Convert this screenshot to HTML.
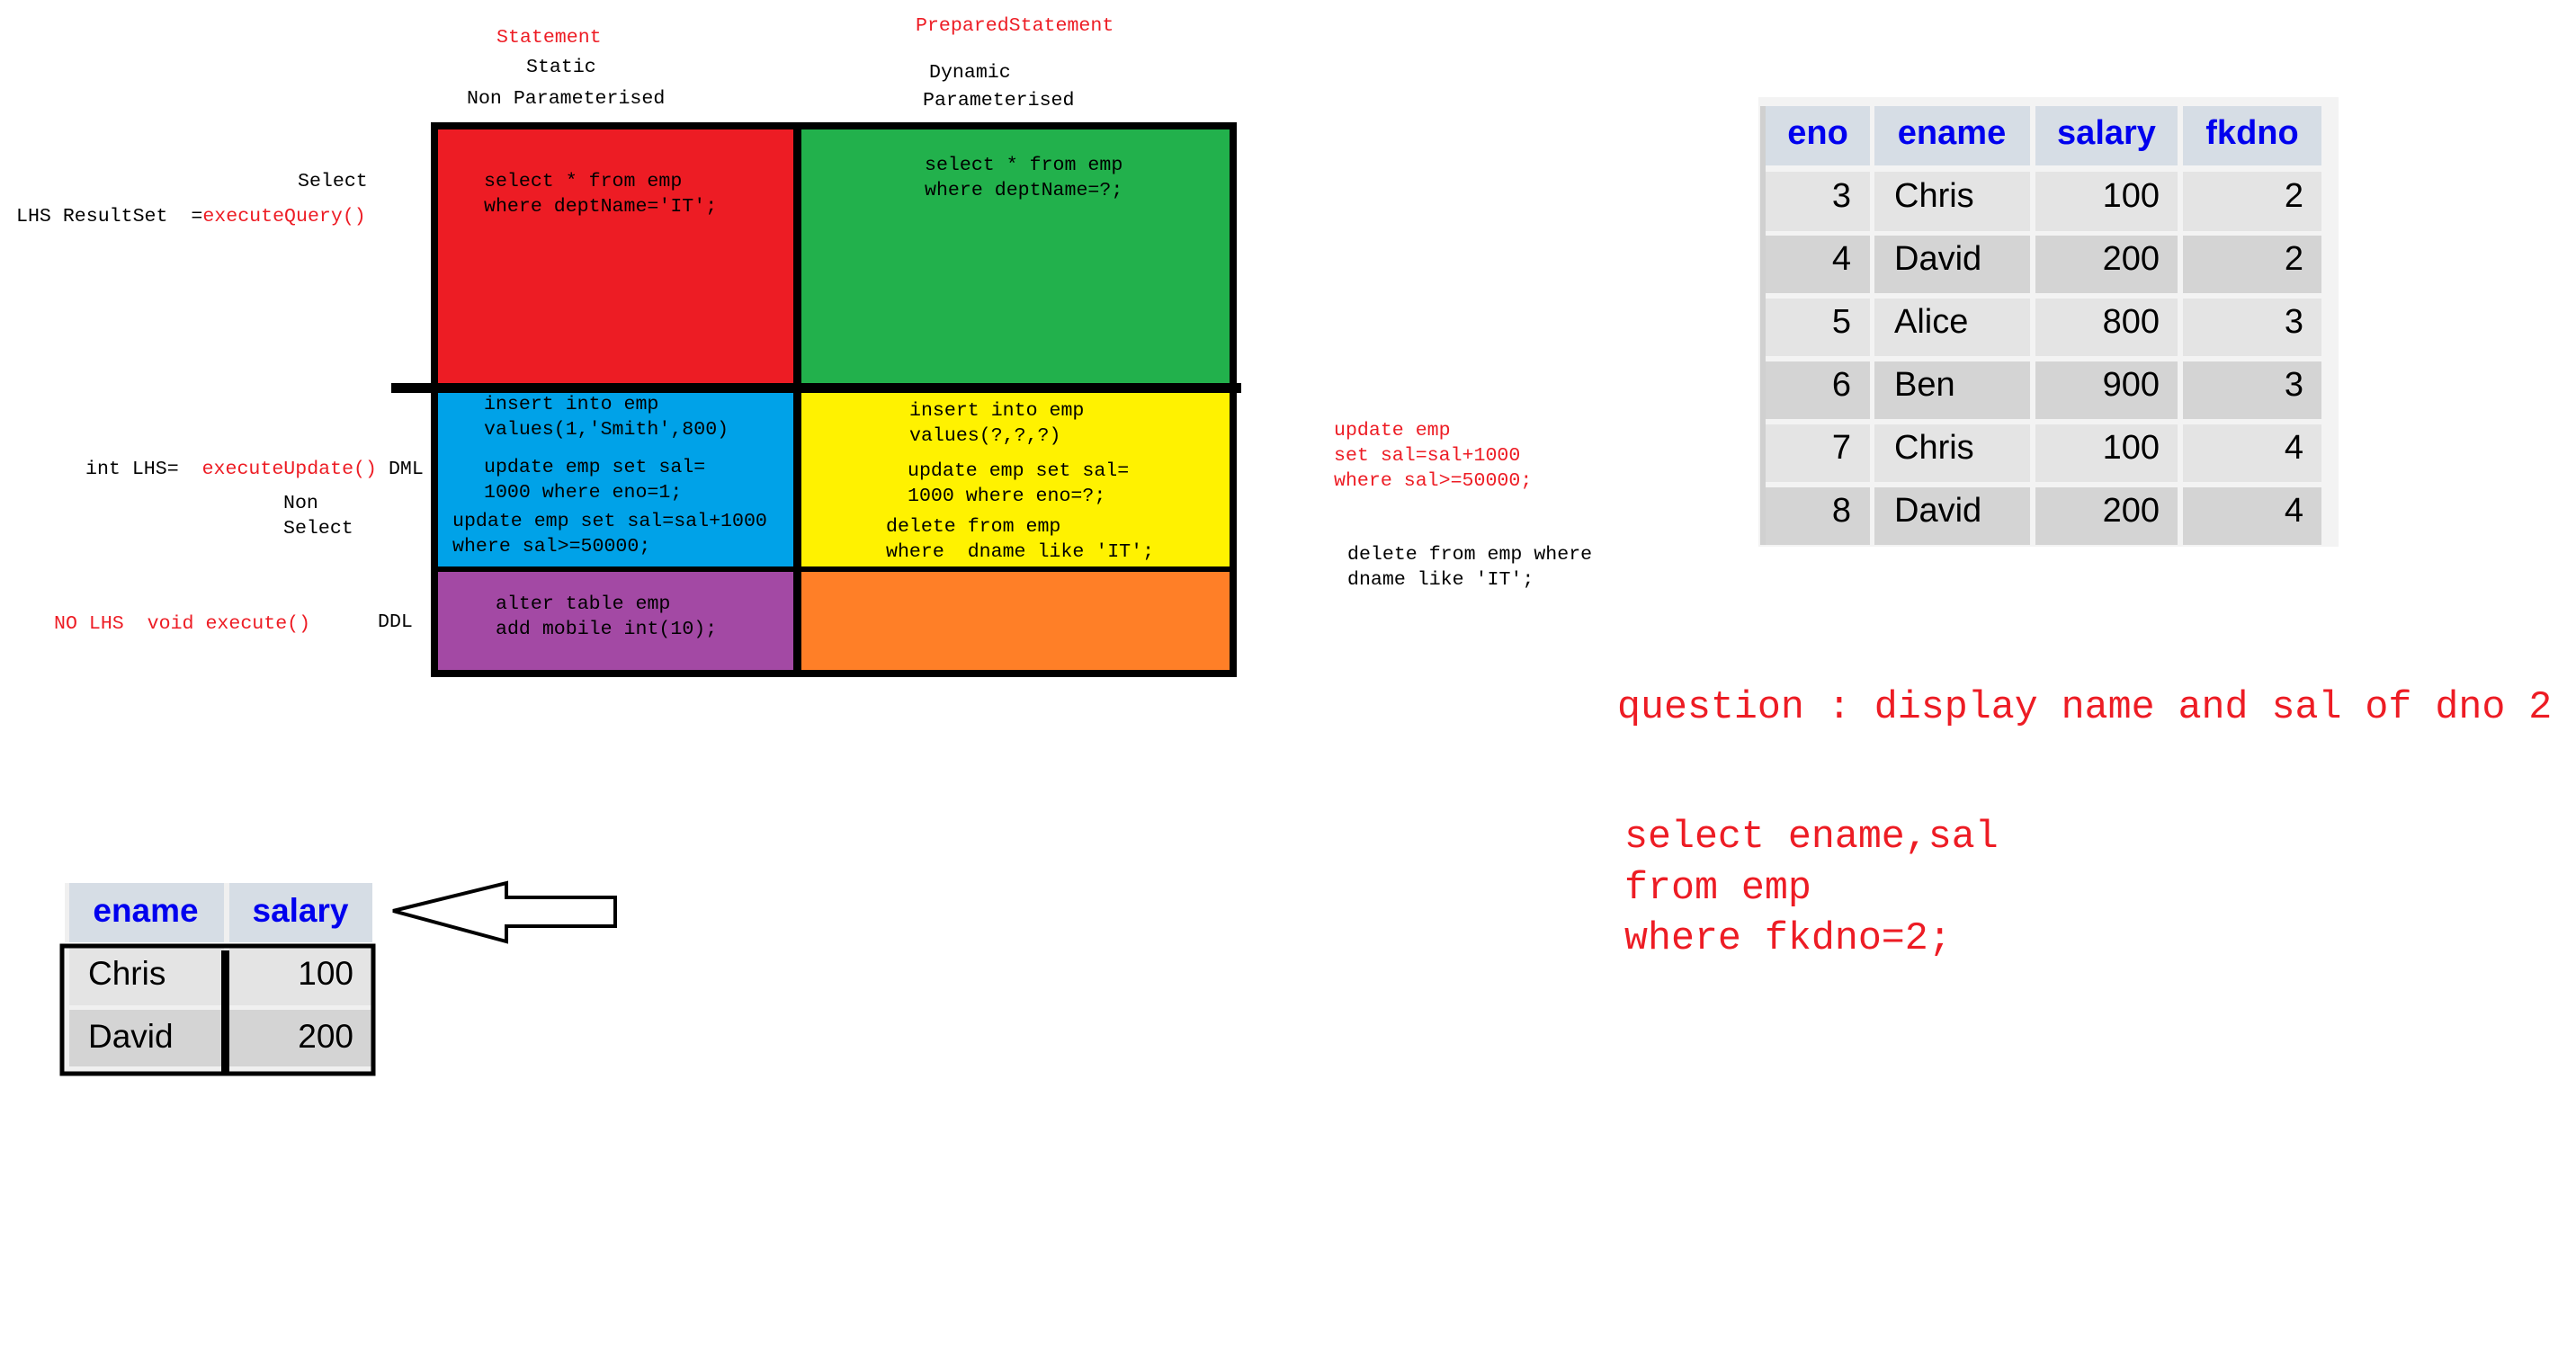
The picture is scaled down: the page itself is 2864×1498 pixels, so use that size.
<!DOCTYPE html>
<html><head><meta charset="utf-8"><style>
body{margin:0;width:2864px;height:1498px;background:#fff;position:relative;overflow:hidden;font-family:"Liberation Mono",monospace;}
#w{position:absolute;left:-4px;top:0;width:2864px;height:1498px;}
.t{position:absolute;white-space:pre;font-size:21.6px;line-height:28px;color:#000;}
.r{color:#ed1c24;}
.b{position:absolute;}
</style></head><body><div id="w">
<div class="t r" style="left:556px;top:28px">Statement</div>
<div class="t" style="left:589px;top:61px">Static</div>
<div class="t" style="left:523px;top:96px">Non Parameterised</div>
<div class="t r" style="left:1022px;top:15px">PreparedStatement</div>
<div class="t" style="left:1037px;top:67px">Dynamic</div>
<div class="t" style="left:1030px;top:98px">Parameterised</div>

<div class="b" style="left:483px;top:136px;width:896px;height:617px;background:#000"></div>
<div class="b" style="left:491px;top:144px;width:395px;height:282px;background:#ed1c24"></div>
<div class="b" style="left:895px;top:144px;width:476px;height:282px;background:#22b14c"></div>
<div class="b" style="left:491px;top:437px;width:395px;height:193px;background:#00a2e8"></div>
<div class="b" style="left:895px;top:437px;width:476px;height:193px;background:#fff200"></div>
<div class="b" style="left:491px;top:636px;width:395px;height:109px;background:#a349a4"></div>
<div class="b" style="left:895px;top:636px;width:476px;height:109px;background:#ff7f27"></div>
<div class="b" style="left:439px;top:426px;width:945px;height:11px;background:#000"></div>

<div class="t" style="left:542px;top:188px">select * from emp
where deptName='IT';</div>
<div class="t" style="left:1032px;top:170px">select * from emp
where deptName=?;</div>
<div class="t" style="left:542px;top:436px">insert into emp
values(1,'Smith',800)</div>
<div class="t" style="left:542px;top:506px">update emp set sal=
1000 where eno=1;</div>
<div class="t" style="left:507px;top:566px">update emp set sal=sal+1000
where sal&gt;=50000;</div>
<div class="t" style="left:1015px;top:443px">insert into emp
values(?,?,?)</div>
<div class="t" style="left:1013px;top:510px">update emp set sal=
1000 where eno=?;</div>
<div class="t" style="left:989px;top:572px">delete from emp
where  dname like 'IT';</div>
<div class="t" style="left:555px;top:658px">alter table emp
add mobile int(10);</div>

<div class="t" style="left:335px;top:188px">Select</div>
<div class="t" style="left:22px;top:227px">LHS ResultSet  =<span class="r">executeQuery()</span></div>
<div class="t" style="left:99px;top:508px">int LHS=  <span class="r">executeUpdate()</span> DML</div>
<div class="t" style="left:319px;top:546px">Non
Select</div>
<div class="t r" style="left:64px;top:680px">NO LHS  void execute()</div>
<div class="t" style="left:424px;top:678px">DDL</div>

<div class="t r" style="left:1487px;top:465px">update emp
set sal=sal+1000
where sal&gt;=50000;</div>
<div class="t" style="left:1502px;top:603px">delete from emp where
dname like 'IT';</div>

<div class="b" style="left:1959px;top:108px;width:645px;height:500px;background:#f3f3f3"></div>
<div class="b" style="left:1961px;top:118px;width:6px;height:488px;background:#d0d0d0"></div>
<svg class="b" style="left:0;top:0" width="2864" height="1498">
<g font-family="Liberation Sans, Arial, sans-serif" font-size="38">
<rect x="1967" y="118" width="116" height="66" fill="#d6dde5"/><rect x="2088" y="118" width="173" height="66" fill="#d6dde5"/><rect x="2267" y="118" width="158" height="66" fill="#d6dde5"/><rect x="2431" y="118" width="154" height="66" fill="#d6dde5"/>
<g fill="#0000ee" font-weight="bold" text-anchor="middle">
<text x="2025" y="160">eno</text><text x="2174" y="160">ename</text><text x="2346" y="160">salary</text><text x="2508" y="160">fkdno</text></g>
<rect x="1967" y="191" width="116" height="66" fill="#e4e4e4"/><rect x="2088" y="191" width="173" height="66" fill="#e4e4e4"/><rect x="2267" y="191" width="158" height="66" fill="#e4e4e4"/><rect x="2431" y="191" width="154" height="66" fill="#e4e4e4"/>
<rect x="1967" y="262" width="116" height="64" fill="#d4d4d4"/><rect x="2088" y="262" width="173" height="64" fill="#d4d4d4"/><rect x="2267" y="262" width="158" height="64" fill="#d4d4d4"/><rect x="2431" y="262" width="154" height="64" fill="#d4d4d4"/>
<rect x="1967" y="332" width="116" height="64" fill="#e4e4e4"/><rect x="2088" y="332" width="173" height="64" fill="#e4e4e4"/><rect x="2267" y="332" width="158" height="64" fill="#e4e4e4"/><rect x="2431" y="332" width="154" height="64" fill="#e4e4e4"/>
<rect x="1967" y="402" width="116" height="64" fill="#d4d4d4"/><rect x="2088" y="402" width="173" height="64" fill="#d4d4d4"/><rect x="2267" y="402" width="158" height="64" fill="#d4d4d4"/><rect x="2431" y="402" width="154" height="64" fill="#d4d4d4"/>
<rect x="1967" y="472" width="116" height="64" fill="#e4e4e4"/><rect x="2088" y="472" width="173" height="64" fill="#e4e4e4"/><rect x="2267" y="472" width="158" height="64" fill="#e4e4e4"/><rect x="2431" y="472" width="154" height="64" fill="#e4e4e4"/>
<rect x="1967" y="542" width="116" height="64" fill="#d4d4d4"/><rect x="2088" y="542" width="173" height="64" fill="#d4d4d4"/><rect x="2267" y="542" width="158" height="64" fill="#d4d4d4"/><rect x="2431" y="542" width="154" height="64" fill="#d4d4d4"/>
<g fill="#000">
<text x="2062" y="230" text-anchor="end">3</text><text x="2110" y="230">Chris</text><text x="2405" y="230" text-anchor="end">100</text><text x="2565" y="230" text-anchor="end">2</text>
<text x="2062" y="300" text-anchor="end">4</text><text x="2110" y="300">David</text><text x="2405" y="300" text-anchor="end">200</text><text x="2565" y="300" text-anchor="end">2</text>
<text x="2062" y="370" text-anchor="end">5</text><text x="2110" y="370">Alice</text><text x="2405" y="370" text-anchor="end">800</text><text x="2565" y="370" text-anchor="end">3</text>
<text x="2062" y="440" text-anchor="end">6</text><text x="2110" y="440">Ben</text><text x="2405" y="440" text-anchor="end">900</text><text x="2565" y="440" text-anchor="end">3</text>
<text x="2062" y="510" text-anchor="end">7</text><text x="2110" y="510">Chris</text><text x="2405" y="510" text-anchor="end">100</text><text x="2565" y="510" text-anchor="end">4</text>
<text x="2062" y="580" text-anchor="end">8</text><text x="2110" y="580">David</text><text x="2405" y="580" text-anchor="end">200</text><text x="2565" y="580" text-anchor="end">4</text>
</g>
<rect x="76" y="982" width="342" height="66" fill="#f0f0f0"/>
<rect x="81" y="982" width="172" height="66" fill="#d6dde5"/><rect x="259" y="982" width="159" height="66" fill="#d6dde5"/>
<text x="166" y="1025" text-anchor="middle" fill="#0000ee" font-weight="bold" font-size="37">ename</text>
<text x="338" y="1025" text-anchor="middle" fill="#0000ee" font-weight="bold" font-size="37">salary</text>
<rect x="76" y="1054" width="342" height="138" fill="#f0f0f0"/>
<rect x="81" y="1054" width="172" height="64" fill="#e4e4e4"/><rect x="259" y="1054" width="159" height="64" fill="#e4e4e4"/>
<rect x="81" y="1123" width="172" height="63" fill="#d4d4d4"/><rect x="259" y="1123" width="159" height="63" fill="#d4d4d4"/>
<text x="102" y="1095" font-size="37">Chris</text><text x="397" y="1095" text-anchor="end" font-size="37">100</text>
<text x="102" y="1165" font-size="37">David</text><text x="397" y="1165" text-anchor="end" font-size="37">200</text>
</g>
<rect x="73" y="1052" width="346" height="142" fill="none" stroke="#000" stroke-width="5"/>
<rect x="250" y="1057" width="9" height="136" fill="#000"/>
<polygon points="441,1013 567,982 567,998 688,998 688,1030 567,1030 567,1047" fill="#fff" stroke="#000" stroke-width="4"/>
</svg>

<div class="t r" style="left:1802px;top:760px;font-size:43.3px;line-height:56px">question : display name and sal of dno 2</div>
<div class="t r" style="left:1810px;top:904px;font-size:43.3px;line-height:56.5px">select ename,sal
from emp
where fkdno=2;</div>
</div></body></html>
